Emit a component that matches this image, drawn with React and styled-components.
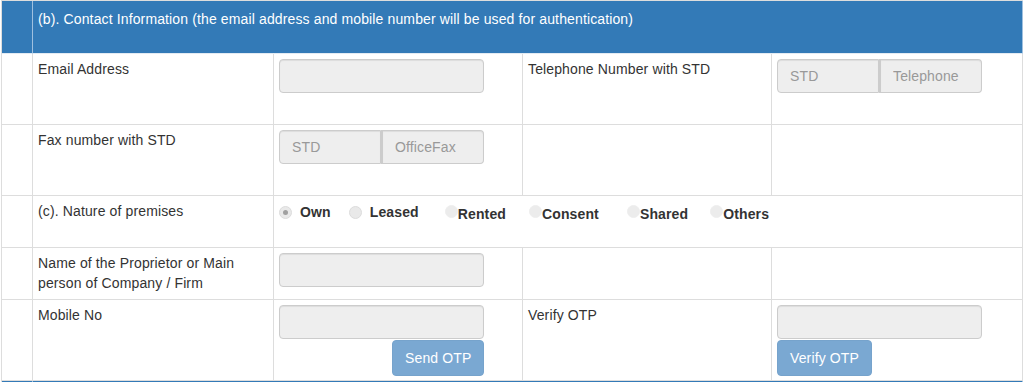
import React from "react";
import styled, { createGlobalStyle } from "styled-components";

const Global = createGlobalStyle`
  html, body { margin: 0; padding: 0; background: #fff; }
  body {
    font-family: "Liberation Sans", Arial, Helvetica, sans-serif;
    font-size: 14px;
    line-height: 20px;
    letter-spacing: 0.13px;
    color: #333;
    overflow: hidden;
  }
  * { box-sizing: border-box; }
`;

const Grid = styled.div`
  display: grid;
  grid-template-columns: 31px 241px 249px 249px 251px;
  grid-template-rows: 53px 71px 71px 52px 52px 81px 60px;
  width: 1022px;
  margin-left: 1px;
  border-left: 1px solid #ddd;
  border-top: 1px solid #ddd;
`;

const Cell = styled.div`
  grid-column: ${(p) => (p.$span ? `span ${p.$span}` : "auto")};
  padding: 5px;
  border-right: 1px solid #ddd;
  border-bottom: 1px solid #ddd;
  min-width: 0;
`;

const HeadCell = styled(Cell)`
  background: #337ab7;
  color: #fff;
  padding: 8px 5px;
  border-right-color: #9fc0df;
  border-bottom-color: #e3ebf3;
`;

const Label = styled.div`
  color: #333;
`;

const Field = styled.input`
  display: block;
  width: ${(p) => p.$w || 205}px;
  height: 34px;
  padding: 6px 12px;
  font: inherit;
  letter-spacing: inherit;
  color: #555;
  background: #eee;
  border: 1px solid #ccc;
  border-radius: 4px;
  box-shadow: inset 0 1px 1px rgba(0, 0, 0, 0.075);
  outline: none;
  &::placeholder { color: #999; opacity: 1; }
`;

const InputGroup = styled.div`
  display: flex;
  width: 205px;
`;

const GroupField = styled(Field)`
  width: ${(p) => p.$w}px;
  border-radius: ${(p) => (p.$first ? "4px 0 0 4px" : "0 4px 4px 0")};
  border-left-width: ${(p) => (p.$first ? "1px" : "2px")};
`;

const Stack = styled.div`
  display: flex;
  flex-direction: column;
  align-items: flex-start;
`;

const OtpButton = styled.button`
  margin-top: 1px;
  margin-left: ${(p) => p.$offset || 0}px;
  padding: 7px 12px;
  font: inherit;
  letter-spacing: inherit;
  color: #fff;
  background: #7aa8d2;
  border: 1px solid #76a3cc;
  border-radius: 4px;
  cursor: not-allowed;
`;

const Options = styled.div`
  display: flex;
  align-items: center;
  height: 20px;
  margin-top: 1px;
  white-space: nowrap;
`;

const Option = styled.label`
  display: flex;
  align-items: center;
  margin-left: ${(p) => p.$lead || 0}px;
  font-weight: bold;
  color: #333;
`;

const RadioDot = styled.span`
  position: relative;
  flex: none;
  width: 13px;
  height: 13px;
  margin-right: ${(p) => (p.$tight ? 0 : 8)}px;
  margin-top: ${(p) => (p.$tight ? -2 : 0)}px;
  border-radius: 50%;
  background: ${(p) => (p.$tight ? "#ececec" : "#e9e9e9")};
  border: 1px solid ${(p) => (p.$tight ? "#eeeeee" : "#dcdcdc")};
  &::after {
    content: "";
    display: ${(p) => (p.$checked ? "block" : "none")};
    position: absolute;
    left: 3px;
    top: 3px;
    width: 5px;
    height: 5px;
    border-radius: 50%;
    background: #a0a0a0;
  }
`;

const OptionText = styled.span`
  margin-top: ${(p) => (p.$drop ? 3 : 0)}px;
`;

const premises = [
  { text: "Own", lead: 0, checked: true },
  { text: "Leased", lead: 18 },
  { text: "Rented", lead: 26, tight: true },
  { text: "Consent", lead: 23, tight: true },
  { text: "Shared", lead: 28, tight: true },
  { text: "Others", lead: 22, tight: true },
];

export default function App() {
  return (
    <>
      <Global />
      <Grid>
        <HeadCell />
        <HeadCell $span={4}>
          (b). Contact Information (the email address and mobile number will be used for authentication)
        </HeadCell>

        <Cell />
        <Cell><Label>Email Address</Label></Cell>
        <Cell><Field disabled /></Cell>
        <Cell><Label>Telephone Number with STD</Label></Cell>
        <Cell>
          <InputGroup>
            <GroupField $first $w={102} disabled placeholder="STD" />
            <GroupField $w={103} disabled placeholder="Telephone" />
          </InputGroup>
        </Cell>

        <Cell />
        <Cell><Label>Fax number with STD</Label></Cell>
        <Cell>
          <InputGroup>
            <GroupField $first $w={102} disabled placeholder="STD" />
            <GroupField $w={103} disabled placeholder="OfficeFax" />
          </InputGroup>
        </Cell>
        <Cell />
        <Cell />

        <Cell />
        <Cell><Label>(c). Nature of premises</Label></Cell>
        <Cell $span={3}>
          <Options>
            {premises.map((o) => (
              <Option key={o.text} $lead={o.lead}>
                <RadioDot $checked={o.checked} $tight={o.tight} />
                <OptionText $drop={o.tight}>{o.text}</OptionText>
              </Option>
            ))}
          </Options>
        </Cell>

        <Cell />
        <Cell><Label>Name of the Proprietor or Main person of Company / Firm</Label></Cell>
        <Cell><Field disabled /></Cell>
        <Cell />
        <Cell />

        <Cell />
        <Cell><Label>Mobile No</Label></Cell>
        <Cell>
          <Stack>
            <Field disabled />
            <OtpButton $offset={113} disabled>Send OTP</OtpButton>
          </Stack>
        </Cell>
        <Cell><Label>Verify OTP</Label></Cell>
        <Cell>
          <Stack>
            <Field disabled />
            <OtpButton disabled>Verify OTP</OtpButton>
          </Stack>
        </Cell>

        <HeadCell />
        <HeadCell $span={4} />
      </Grid>
    </>
  );
}
